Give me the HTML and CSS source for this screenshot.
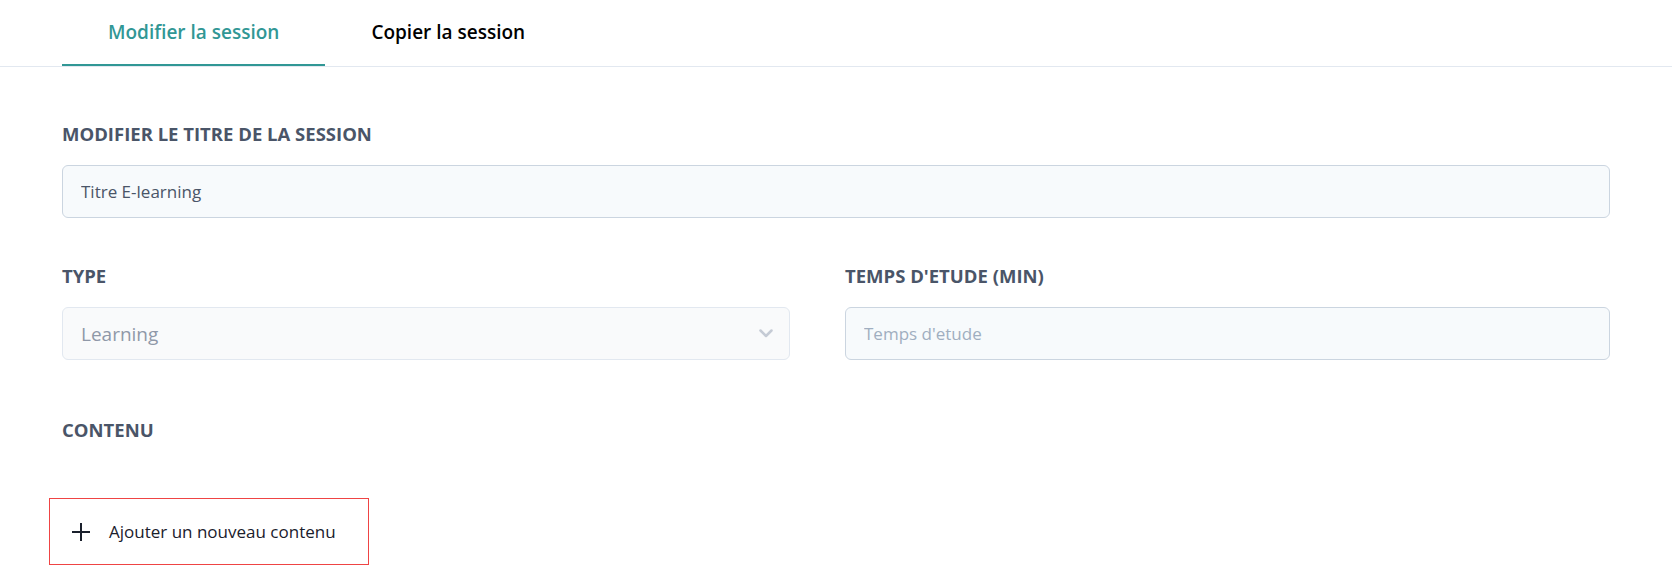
FILE: index.html
```html
<!DOCTYPE html>
<html lang="fr">
<head>
    <meta charset="UTF-8">
    <meta name="viewport" content="width=device-width, initial-scale=1.0">
    <title>Modifier la session</title>
    <link rel="stylesheet" href="styles.css">
</head>
<body>
    <div class="tabs">
        <div class="tab active">Modifier la session</div>
        <div class="tab">Copier la session</div>
    </div>

    <div class="contenu-page">
        <div class="form-group">
            <label for="titre">Modifier le titre de la session</label>
            <input type="text" id="titre" class="champ" value="Titre E-learning">
        </div>

        <div class="form-row">
            <div class="form-group">
                <label for="type">Type</label>
                <div class="select-wrap">
                    <select id="type" class="champ select" disabled>
                        <option>Learning</option>
                    </select>
                    <svg class="chevron" width="14" height="9" viewBox="0 0 14 9">
                        <path d="M1.5 1.5l5.5 5.5 5.5-5.5" fill="none" stroke="currentColor" stroke-width="2.5" stroke-linecap="round" stroke-linejoin="round"/>
                    </svg>
                </div>
            </div>
            <div class="form-group">
                <label for="temps">Temps d'etude (min)</label>
                <input type="text" id="temps" class="champ" placeholder="Temps d'etude">
            </div>
        </div>

        <div class="form-group contenu">
            <label>Contenu</label>
        </div>

        <button class="ajouter">
            <svg width="20" height="20" viewBox="0 0 20 20">
                <path d="M10 1v18M1 10h18" stroke="currentColor" stroke-width="2"/>
            </svg>
            Ajouter un nouveau contenu
        </button>
    </div>
</body>
</html>
```

FILE: styles.css
```css
body {
    margin: 0;
    font-family: "Open Sans", Arial, sans-serif;
    background-color: white;
    color: #1a202c;
}
.tabs {
    display: flex;
    padding: 0 62px;
    border-bottom: 1px solid #e2e8f0;
}
.tab {
    height: 64px;
    line-height: 64px;
    padding: 0 46px;
    font-size: 19px;
    font-weight: 600;
    color: #000;
    border-bottom: 2px solid transparent;
}
.tab.active {
    color: #319795;
    border-bottom-color: #319795;
}
.contenu-page {
    padding: 55px 62px 0;
}
.form-group {
    margin-bottom: 46px;
}
label {
    display: block;
    line-height: 24px;
    margin-bottom: 19px;
    font-size: 18.5px;
    font-weight: 700;
    text-transform: uppercase;
    color: #4a5568;
}
.champ {
    display: block;
    width: 100%;
    height: 53px;
    padding: 0 18px;
    border: 1px solid #cbd5e0;
    border-radius: 6px;
    background-color: #f7fafc;
    font-family: inherit;
    font-size: 17px;
    color: #4a5568;
    box-sizing: border-box;
}
.champ::placeholder {
    color: #a0aec0;
}
.form-row {
    display: grid;
    grid-template-columns: 728px 1fr;
    column-gap: 55px;
}
.form-row .form-group {
    margin-bottom: 58px;
}
.select-wrap {
    position: relative;
}
.select {
    appearance: none;
    font-size: 19px;
    color: #8f98a8;
    background-color: #f9fafb;
    border-color: #e2e8f0;
    opacity: 1;
}
.chevron {
    position: absolute;
    right: 17px;
    top: 22px;
    color: #c5cbd5;
}
.contenu {
    margin-bottom: 56px;
}
.contenu label {
    margin-bottom: 0;
}
.ajouter {
    display: flex;
    align-items: center;
    gap: 18px;
    width: 320px;
    height: 67px;
    margin-left: -13px;
    padding: 0 0 0 21px;
    border: 1px solid #ef4444;
    background-color: white;
    font-family: inherit;
    font-size: 17px;
    color: #1a202c;
    cursor: pointer;
}
```
